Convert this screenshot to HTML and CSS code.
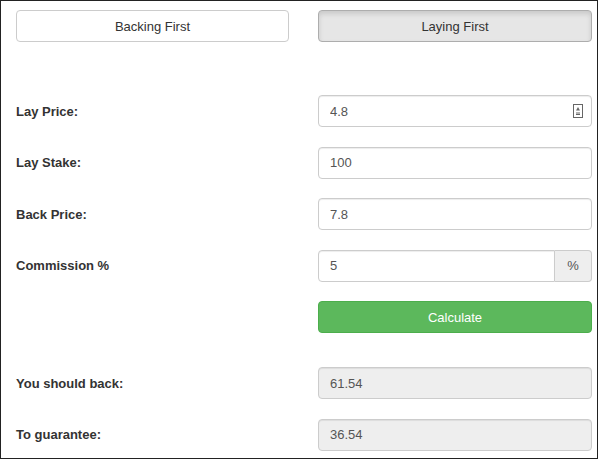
FILE: index.html
```html
<!DOCTYPE html>
<html>
    <head lang="en">
        <meta charset="UTF-8">
        <title>Lay Calculator</title>
        <link rel="stylesheet" href="styles.css">
    </head>
    <body>
        <div id="frame">
            <div class="toggle">
                <button class="btn">Backing First</button>
                <button class="btn active">Laying First</button>
            </div>
            <div class="form">
                <div class="row">
                    <label>Lay Price:</label>
                    <div class="field">
                        <input class="input" type="text" value="4.8">
                        <svg class="spin" width="10" height="14" viewBox="0 0 10 14">
                            <rect x="0.5" y="0.5" width="9" height="13" fill="none" stroke="#666" stroke-width="1"/>
                            <path d="M5 3 L7 6.5 L3 6.5 Z" fill="#666"/>
                            <path d="M3 9 H7 M3 10.5 H7" stroke="#666" stroke-width="1"/>
                        </svg>
                    </div>
                </div>
                <div class="row">
                    <label>Lay Stake:</label>
                    <input class="input" type="text" value="100">
                </div>
                <div class="row">
                    <label>Back Price:</label>
                    <input class="input" type="text" value="7.8">
                </div>
                <div class="row">
                    <label>Commission %</label>
                    <div class="group">
                        <input class="input" type="text" value="5">
                        <span class="addon">%</span>
                    </div>
                </div>
                <div class="row">
                    <span></span>
                    <button class="btn calc">Calculate</button>
                </div>
            </div>
            <div class="form result">
                <div class="row">
                    <label>You should back:</label>
                    <input class="input" type="text" value="61.54" readonly>
                </div>
                <div class="row">
                    <label>To guarantee:</label>
                    <input class="input" type="text" value="36.54" readonly>
                </div>
            </div>
        </div>
    </body>
</html>
```
FILE: styles.css
```css
* {
    margin: 0;
    padding: 0;
    box-sizing: border-box;
}
body {
    background: #fff;
    font-family: "Liberation Sans", Arial, sans-serif;
    font-size: 13px;
    color: #333;
}
#frame {
    width: 598px;
    height: 459px;
    border: 1px solid #222;
    padding: 9px 5px 0 15px;
}
.toggle,
.row {
    display: grid;
    grid-template-columns: 273px 274px;
    column-gap: 29px;
    align-items: center;
}
.btn {
    height: 32px;
    border: 1px solid #ccc;
    border-radius: 4px;
    background: #fff;
    color: #333;
    font-family: inherit;
    font-size: 13px;
}
.btn.active {
    background: #e6e6e6;
    border-color: #adadad;
    box-shadow: inset 0 3px 5px rgba(0, 0, 0, .125);
}
.form {
    display: flex;
    flex-direction: column;
    row-gap: 19.5px;
    margin-top: 53px;
}
.result {
    margin-top: 34px;
}
label {
    font-weight: bold;
}
.input {
    width: 100%;
    height: 32px;
    padding: 0 11px;
    border: 1px solid #ccc;
    border-radius: 4px;
    background: #fff;
    color: #555;
    font-family: inherit;
    font-size: 13px;
    box-shadow: inset 0 1px 1px rgba(0, 0, 0, .075);
    outline: none;
}
.input[readonly] {
    background: #eee;
}
.field {
    position: relative;
}
.spin {
    position: absolute;
    right: 9px;
    top: 9px;
}
.group {
    display: flex;
}
.group .input {
    border-radius: 4px 0 0 4px;
}
.addon {
    width: 37px;
    flex: none;
    display: flex;
    align-items: center;
    justify-content: center;
    border: 1px solid #ccc;
    border-left: none;
    border-radius: 0 4px 4px 0;
    background: #eee;
    color: #555;
}
.calc {
    background: #5cb85c;
    border-color: #4cae4c;
    color: #fff;
}
```
